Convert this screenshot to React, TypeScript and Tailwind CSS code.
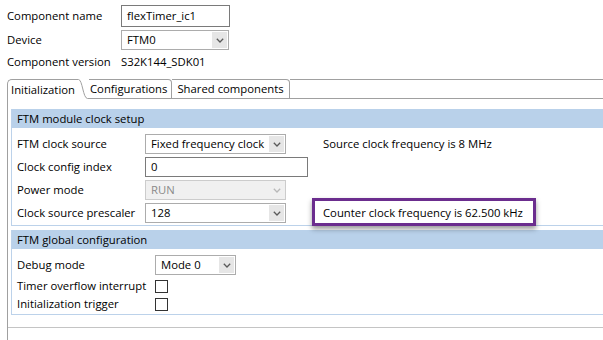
import clsx from 'clsx'

const Chevron = ({ disabled }: { disabled?: boolean }) => (
  <span
    className={clsx(
      'flex h-[16px] w-[15px] shrink-0 items-center justify-center',
      !disabled && 'bg-[#e6e6e6]',
    )}
  >
    <svg width="8" height="5" viewBox="0 0 8 5">
      <path
        d="M0.8 0.8 L4 4 L7.2 0.8"
        fill="none"
        stroke={disabled ? '#b8b8b8' : '#5a5a5a'}
        strokeWidth="1.3"
      />
    </svg>
  </span>
)

const Combo = ({
  value,
  className,
  disabled,
}: {
  value: string
  className: string
  disabled?: boolean
}) => (
  <div
    className={clsx(
      'flex h-[20px] shrink-0 items-center justify-between border pl-[5px] pr-[1px]',
      disabled
        ? 'border-[#cccccc] bg-[#f0f0f0] text-[#8a8a8a]'
        : 'border-[#acacac] bg-white',
      className,
    )}
  >
    <span className="whitespace-nowrap">{value}</span>
    <Chevron disabled={disabled} />
  </div>
)

const Checkbox = () => (
  <span className="block h-[13px] w-[13px] shrink-0 border border-[#333333] bg-white" />
)

const SectionHeader = ({ title }: { title: string }) => (
  <div className="flex h-[19px] items-center bg-[#b9d1ea] pl-[5px]">{title}</div>
)

export default function App() {
  return (
    <div className="h-[340px] w-[603px] overflow-hidden bg-white font-['Segoe_UI','Open_Sans','Noto_Sans',sans-serif] text-[11.3px] leading-none text-black">
      {/* component header */}
      <div className="flex flex-col pl-[7px] pt-[5px]">
        <div className="flex h-[22px] items-center">
          <span className="w-[114px] shrink-0">Component name</span>
          <div className="flex h-[22px] w-[109px] shrink-0 items-center border border-[#7a7a7a] pl-[5px]">
            flexTimer_ic1
          </div>
        </div>
        <div className="mt-[3px] flex h-[20px] items-center">
          <span className="w-[114px] shrink-0">Device</span>
          <Combo value="FTM0" className="w-[108px]" />
        </div>
        <div className="mt-[2px] flex h-[20px] items-center">
          <span className="w-[114px] shrink-0">Component version</span>
          <span>S32K144_SDK01</span>
        </div>
      </div>

      {/* tabs */}
      <div className="mt-[7px] flex h-[20px] items-stretch">
        <div className="w-[7px] shrink-0" />
        <div className="flex items-center rounded-tl-[5px] border-l border-t border-[#a0a0a0] pl-[3px] pr-[2px]">
          Initialization
        </div>
        <svg width="12" height="20" viewBox="0 0 12 20" className="shrink-0">
          <path
            d="M0 0.5 H1.5 C5.5 0.5 6 19.5 10.5 19.5 H12"
            fill="none"
            stroke="#a0a0a0"
          />
        </svg>
        <div className="flex items-center rounded-tr-[4px] border-y border-r border-[#a0a0a0] pl-[1px] pr-[4px]">
          Configurations
        </div>
        <div className="flex items-center rounded-tr-[4px] border-y border-r border-[#a0a0a0] pl-[5px] pr-[5px]">
          Shared components
        </div>
        <div className="flex-1 border-y border-[#a0a0a0]" />
      </div>

      {/* tab body */}
      <div className="ml-[7px] h-[242px] border-l border-[#a0a0a0]">
        <div className="h-[229px] border-b border-[#c4c4c4] pl-[3px] pt-[10px]">
          {/* FTM module clock setup */}
          <div className="border-b border-l border-[#bcd2ea]">
            <SectionHeader title="FTM module clock setup" />
            <div className="flex flex-col gap-[3px] pb-[2px] pl-[5px] pt-[6px]">
              <div className="flex h-[20px] items-center">
                <span className="w-[128px] shrink-0">FTM clock source</span>
                <div className="w-[178px] shrink-0">
                  <Combo value="Fixed frequency clock" className="w-[141px]" />
                </div>
                <span>Source clock frequency is 8 MHz</span>
              </div>
              <div className="flex h-[20px] items-center">
                <span className="w-[128px] shrink-0">Clock config index</span>
                <div className="flex h-[20px] w-[163px] shrink-0 items-center border border-[#7a7a7a] pl-[5px]">
                  0
                </div>
              </div>
              <div className="flex h-[20px] items-center">
                <span className="w-[128px] shrink-0">Power mode</span>
                <Combo value="RUN" className="w-[141px]" disabled />
              </div>
              <div className="flex h-[20px] items-center">
                <span className="w-[128px] shrink-0">Clock source prescaler</span>
                <div className="w-[178px] shrink-0">
                  <Combo value="128" className="w-[141px]" />
                </div>
                <span className="relative whitespace-nowrap">
                  Counter clock frequency is 62.500 kHz
                  <span className="absolute left-[-11px] top-[-9px] h-[28px] w-[224px] border-[3px] border-[#6b2d8e] shadow-[0_3px_5px_rgba(0,0,0,0.4)]" />
                </span>
              </div>
            </div>
          </div>

          {/* FTM global configuration */}
          <div className="mt-[4px] border-b border-l border-[#bcd2ea]">
            <SectionHeader title="FTM global configuration" />
            <div className="flex flex-col pb-[1px] pl-[5px] pt-[6px]">
              <div className="flex h-[20px] items-center">
                <span className="w-[138px] shrink-0">Debug mode</span>
                <Combo value="Mode 0" className="w-[81px]" />
              </div>
              <div className="mt-[2px] flex h-[18px] items-center">
                <span className="w-[138px] shrink-0">Timer overflow interrupt</span>
                <Checkbox />
              </div>
              <div className="flex h-[18px] items-center">
                <span className="w-[138px] shrink-0">Initialization trigger</span>
                <Checkbox />
              </div>
            </div>
          </div>
        </div>
      </div>
    </div>
  )
}
